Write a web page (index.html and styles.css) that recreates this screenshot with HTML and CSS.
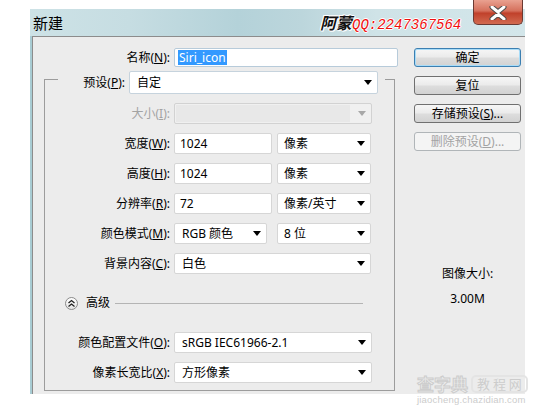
FILE: index.html
```html
<!DOCTYPE html>
<html>
<head>
<meta charset="utf-8">
<link rel="stylesheet" href="styles.css">
</head>
<body>
<div class="window">
  <div class="titlebar"><span class="title">新建</span></div>
  <div class="closebtn"><svg width="22" height="14" viewBox="0 0 22 14"><path d="M5 1 L11 6 L17 1 M5 13 L11 8 L17 13" stroke="#4a4a4a" stroke-width="5" fill="none" stroke-linecap="round"/><path d="M5 1 L11 6 L17 1 M5 13 L11 8 L17 13" stroke="#ffffff" stroke-width="3" fill="none" stroke-linecap="round"/></svg></div>
  <div class="qq"><span class="amg">阿蒙</span><span class="qqnum">QQ:2247367564</span></div>
  <div class="panel">
    <div class="content">
      <div class="left">
        <div class="row name-row">
          <label class="lbl lbl-name">名称(<u>N</u>):</label>
          <div class="field name-field"><span class="sel">Siri_icon</span></div>
        </div>
        <div class="group">
          <div class="preset-wrap">
            <label class="lbl preset-lbl">预设(<u>P</u>):</label>
            <div class="field select preset-sel"><span>自定</span><i class="arrow"></i></div>
          </div>
          <div class="row">
            <label class="lbl dis">大小(<u>I</u>):</label>
            <div class="field select disabled w198"><span class="dis-fill"></span><i class="arrow arrow-dis"></i></div>
          </div>
          <div class="row">
            <label class="lbl">宽度(<u>W</u>):</label>
            <div class="field input w98">1024</div>
            <div class="field select unit"><span>像素</span><i class="arrow"></i></div>
          </div>
          <div class="row">
            <label class="lbl">高度(<u>H</u>):</label>
            <div class="field input w98">1024</div>
            <div class="field select unit"><span>像素</span><i class="arrow"></i></div>
          </div>
          <div class="row">
            <label class="lbl">分辨率(<u>R</u>):</label>
            <div class="field input w98">72</div>
            <div class="field select unit"><span>像素/英寸</span><i class="arrow"></i></div>
          </div>
          <div class="row">
            <label class="lbl">颜色模式(<u>M</u>):</label>
            <div class="field select w93"><span>RGB 颜色</span><i class="arrow"></i></div>
            <div class="field select unit unit-wide"><span>8 位</span><i class="arrow"></i></div>
          </div>
          <div class="row">
            <label class="lbl">背景内容(<u>C</u>):</label>
            <div class="field select w197"><span>白色</span><i class="arrow"></i></div>
          </div>
          <div class="adv-row">
            <span class="adv-btn"><svg width="9" height="9" viewBox="0 0 9 9"><path d="M1.5 4 L4.5 1.5 L7.5 4 M1.5 7.5 L4.5 5 L7.5 7.5" stroke="#222" stroke-width="1.3" fill="none"/></svg></span>
            <span class="adv-text">高级</span>
            <span class="adv-line"></span>
          </div>
          <div class="row row-profile">
            <label class="lbl">颜色配置文件(<u>O</u>):</label>
            <div class="field select w198"><span>sRGB IEC61966-2.1</span><i class="arrow"></i></div>
          </div>
          <div class="row">
            <label class="lbl">像素长宽比(<u>X</u>):</label>
            <div class="field select w198"><span>方形像素</span><i class="arrow"></i></div>
          </div>
        </div>
      </div>
      <div class="right">
        <button class="btn btn-default">确定</button>
        <button class="btn">复位</button>
        <button class="btn">存储预设(<u>S</u>)...</button>
        <button class="btn btn-dis">删除预设(<u>D</u>)...</button>
        <div class="imgsize-label">图像大小:</div>
        <div class="imgsize-val">3.00M</div>
      </div>
    </div>
  </div>
</div>
<div class="wm">
  <div class="wm-top"><span class="wm-big">查字典</span><span class="wm-box">教 程 网</span></div>
  <div class="wm-url">jiaocheng.chazidian.com</div>
</div>
</body>
</html>
```

FILE: styles.css
```css
* { box-sizing: border-box; }
html, body { margin: 0; padding: 0; }
body {
  width: 550px;
  height: 406px;
  background: #ffffff;
  position: relative;
  overflow: hidden;
  font-family: "Noto Sans", "Noto Sans CJK SC", sans-serif;
  font-size: 12px;
  color: #000;
}
u { text-decoration: underline; text-underline-offset: 1px; }

.window {
  position: relative;
  margin: 9px 0 0 30px;
  width: 495px;
}
.titlebar {
  height: 27px;
  background: linear-gradient(90deg, #cde2e6 0%, #c6dde2 20%, #b4d2d9 42%, #bcd6dc 55%, #cfe3e7 70%, #d3e6ea 100%);
  padding-left: 3px;
  display: flex;
  align-items: center;
}
.title {
  font-family: "Noto Sans CJK SC", sans-serif;
  font-size: 15px;
  line-height: 1;
  color: #000;
}
.closebtn {
  position: absolute;
  left: 443px;
  top: -9px;
  width: 50px;
  height: 25px;
  border: 1px solid #6b3a33;
  border-top: none;
  border-radius: 0 0 5px 5px;
  background: linear-gradient(180deg, #e9a190 0%, #d5705c 45%, #c0412b 55%, #d26a50 100%);
  display: flex;
  align-items: center;
  justify-content: center;
  padding-top: 2px;
}
.qq {
  position: absolute;
  left: 290px;
  top: 3px;
  font-style: italic;
  line-height: 20px;
  white-space: nowrap;
}
.amg {
  font-family: "Noto Sans CJK SC", sans-serif;
  font-weight: 700;
  font-size: 16px;
  color: #111;
  text-shadow: -1px 0 #fff, 1px 0 #fff, 0 -1px #fff, 0 1px #fff, 1px 1px #fff, -1px -1px #fff;
}
.qqnum {
  font-family: "Liberation Mono", monospace;
  font-size: 14px;
  color: #f01010;
  text-shadow: -1px 0 #fff, 1px 0 #fff, 0 -1px #fff, 0 1px #fff;
}

.panel {
  height: 358px;
  border-left: 2px solid #a8ccd3;
  background: #ececec;
}
.content {
  height: 100%;
  border-top: 1px solid #8c8c8c;
  border-left: 1px solid #8c8c8c;
  display: flex;
}
.left {
  width: 381px;
  padding: 11px 0 0 11px;
}
.row {
  display: flex;
  align-items: center;
  gap: 4px;
  height: 21px;
  margin-top: 9px;
}
.name-row { margin-top: 0; height: 19px; }
.lbl {
  flex: none;
  width: 125px;
  text-align: right;
  white-space: nowrap;
  line-height: 16px;
}
.lbl-name { width: 126px; }
.dis { color: #a3a3a3; }

.field {
  flex: none;
  height: 21px;
  background: #fff;
  border: 1px solid #d6d6d6;
  border-radius: 2px;
  display: flex;
  align-items: center;
  white-space: nowrap;
  line-height: 16px;
}
.input { padding-left: 5px; }
.select { padding-left: 7px; }
.name-field {
  width: 224px;
  height: 19px;
  border-color: #b7cbda;
  padding-left: 3px;
}
.sel {
  background: #3399ff;
  color: #fff;
  padding: 0 1px;
  line-height: 15px;
}
.group {
  margin-top: 12px;
  width: 351px;
  border: 1px solid #9c9c9c;
  padding-bottom: 7px;
}
.preset-wrap {
  margin: -9px 0 0 13px;
  width: 327px;
  height: 23px;
  padding-right: 7px;
  background: #ececec;
  display: flex;
  align-items: center;
  gap: 4px;
}
.preset-lbl { width: 67px; }
.preset-sel {
  width: 249px;
  height: 23px;
  border-color: #c6d3dd;
}
.disabled {
  background: #f0f0f0;
  border-color: #d2d2d2;
  padding-left: 1px;
}
.dis-fill {
  width: 174px;
  height: 17px;
  background: #e8e8e8;
}
.w198 { width: 198px; }
.w197 { width: 197px; }
.w98 { width: 98px; }
.w93 { width: 93px; }
.unit { width: 94px; margin-left: 1px; padding-left: 6px; }
.unit-wide { margin-left: 6px; }
.arrow {
  margin-left: auto;
  margin-right: 5px;
  width: 0;
  height: 0;
  border-left: 4.5px solid transparent;
  border-right: 4.5px solid transparent;
  border-top: 5px solid #000;
}
.arrow-dis { border-top-color: #a8a8a8; }

.adv-row {
  display: flex;
  align-items: center;
  height: 14px;
  margin-top: 22px;
  padding-left: 20px;
  padding-right: 31px;
}
.adv-btn {
  width: 13px;
  height: 13px;
  border-radius: 50%;
  border: 1px solid #8a8a8a;
  background: linear-gradient(180deg, #ffffff 0%, #e4e4e4 100%);
  display: flex;
  align-items: center;
  justify-content: center;
}
.adv-text { margin-left: 8px; line-height: 14px; }
.adv-line {
  flex: 1;
  height: 1px;
  background: #b4b4b4;
  margin-left: 5px;
}
.row-profile { margin-top: 22px; }

.right {
  width: 107px;
  margin-left: 0;
  padding-top: 11px;
  display: flex;
  flex-direction: column;
  align-items: stretch;
}
.btn {
  height: 19px;
  margin: 0 0 9px 0;
  padding: 0;
  border: 1px solid #707070;
  border-radius: 3px;
  background: linear-gradient(180deg, #f6f6f6 0%, #ebebeb 48%, #dddddd 52%, #d2d2d2 100%);
  font-family: "Noto Sans", "Noto Sans CJK SC", sans-serif;
  font-size: 12px;
  line-height: 15px;
  color: #000;
}
.btn-default {
  border-color: #3c7fb1;
  box-shadow: inset 0 0 0 1px #a8dcf8;
}
.btn-dis {
  border-color: #b0b5b8;
  background: #f4f4f4;
  color: #a3a3a3;
}
.imgsize-label {
  margin-top: 106px;
  text-align: center;
  line-height: 16px;
}
.imgsize-val {
  margin-top: 9px;
  text-align: center;
  line-height: 16px;
}

.wm {
  position: absolute;
  left: 417px;
  top: 374px;
  width: 122px;
  color: #d0d0d0;
}
.wm-top {
  display: flex;
  align-items: center;
  height: 20px;
}
.wm-big {
  font-family: "Noto Sans CJK SC", sans-serif;
  font-size: 17px;
  font-weight: 700;
  color: #ececec;
  -webkit-text-stroke: 1px #cdcdcd;
  line-height: 20px;
}
.wm-box {
  margin-left: 3px;
  padding: 0 4px;
  height: 18px;
  border: 2px solid #e4e4e4;
  border-radius: 5px;
  font-family: "Noto Sans CJK SC", sans-serif;
  font-size: 13px;
  line-height: 14px;
  color: #cccccc;
  white-space: nowrap;
}
.wm-url {
  font-family: "Liberation Sans", sans-serif;
  font-size: 9.5px;
  line-height: 11px;
  color: #cccccc;
  letter-spacing: 0.2px;
}
```
